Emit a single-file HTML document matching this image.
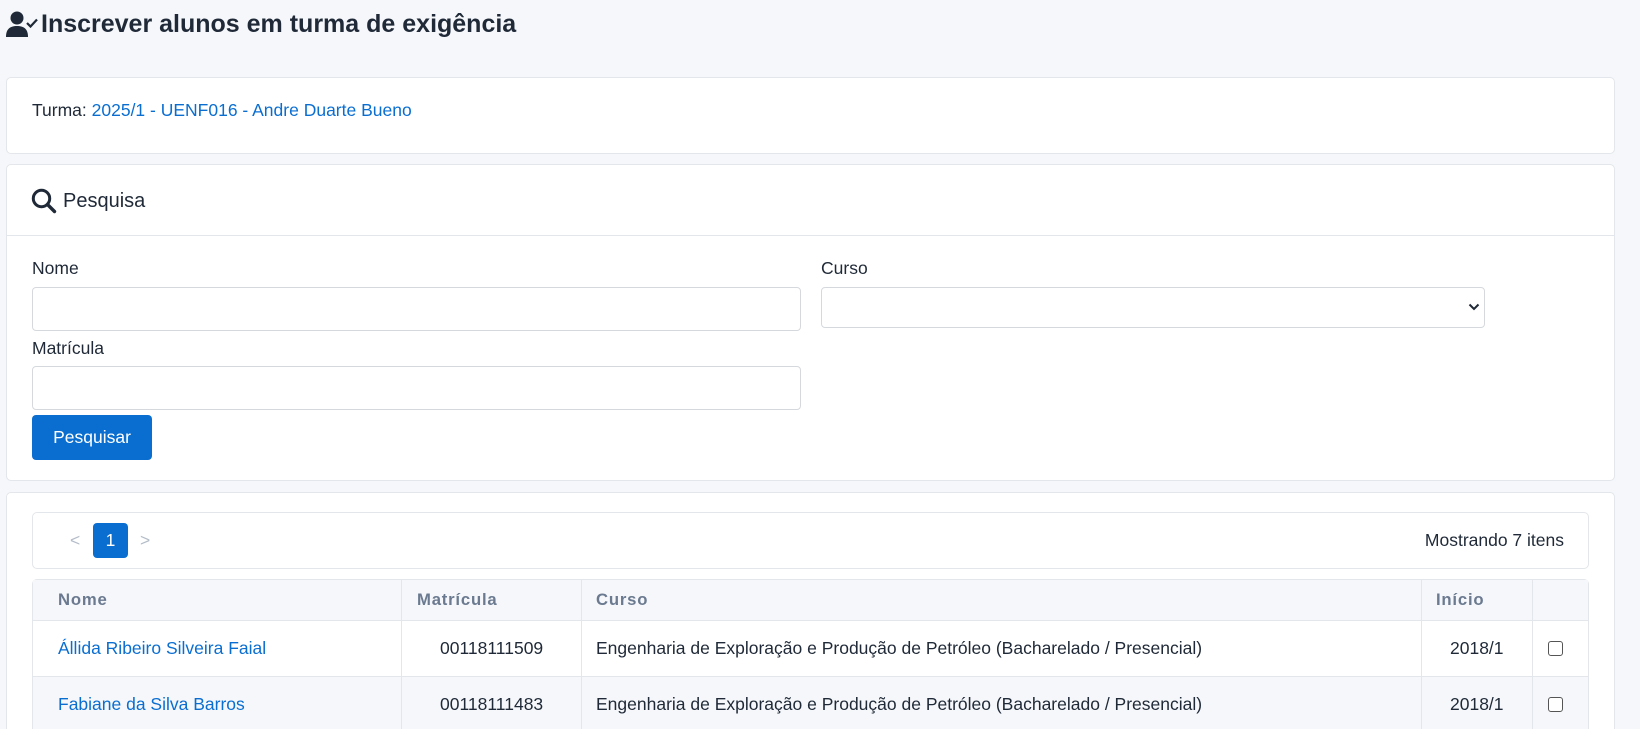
<!DOCTYPE html>
<html><head><meta charset="utf-8"><style>
*{box-sizing:border-box;margin:0;padding:0}
html{width:1640px;height:729px;overflow:hidden}
body{width:1640px;height:729px;overflow:hidden;background:#f5f7fa;font-family:"Liberation Sans",sans-serif;color:#1f2937;font-size:17.5px;position:relative}
.a{position:absolute}
.card{position:absolute;background:#fff;border:1px solid #e3e6ea;border-radius:5px}
.inp{position:absolute;background:#fff;border:1px solid #d5d9de;border-radius:4px}
a{color:#0a6ed1;text-decoration:none}
.th{position:absolute;top:579px;height:41px;line-height:41px;font-weight:bold;color:#6b7a90;letter-spacing:0.8px;font-size:16.7px}
.cell{position:absolute;line-height:56px}
.vl{position:absolute;top:579px;width:1px;height:150px;background:#e3e6ea}
.hl{position:absolute;left:32px;width:1557px;height:1px;background:#e3e6ea}
.cb{position:absolute;width:15px;height:15px;border:1.5px solid #555;border-radius:3px;background:#fff}
</style></head><body>
<svg class="a" style="left:5px;top:10px" width="34" height="28" viewBox="0 0 34 28">
<circle cx="12" cy="8" r="6.5" fill="#1f2937"/>
<path d="M1 27 C1 19 5 16 12 16 C19 16 23 19 23 27 Z" fill="#1f2937"/>
<path d="M22 13 L25.5 16.5 L32 9.5" stroke="#1f2937" stroke-width="2.2" fill="none"/>
</svg>
<div class="a" style="left:41px;top:7px;font-size:25px;font-weight:bold;line-height:34px">Inscrever alunos em turma de exigência</div>

<div class="card" style="left:6px;top:77px;width:1609px;height:77px"></div>
<div class="a" style="left:32px;top:99px;line-height:22px">Turma: <a>2025/1 - UENF016 - Andre Duarte Bueno</a></div>

<div class="card" style="left:6px;top:164px;width:1609px;height:317px"></div>
<div class="a" style="left:7px;top:235px;width:1607px;height:1px;background:#e3e6ea"></div>
<svg class="a" style="left:31px;top:188px" width="26" height="26" viewBox="0 0 26 26"><circle cx="10.5" cy="10.5" r="8.2" stroke="#1f2937" stroke-width="3" fill="none"/><path d="M16.5 16.5 L23.5 23.5" stroke="#1f2937" stroke-width="3.4" stroke-linecap="round"/></svg>
<div class="a" style="left:63px;top:188px;font-size:20px;line-height:26px">Pesquisa</div>

<div class="a" style="left:32px;top:257px;line-height:22px">Nome</div>
<div class="inp" style="left:32px;top:287px;width:769px;height:44px"></div>
<div class="a" style="left:821px;top:257px;line-height:22px">Curso</div>
<div class="inp" style="left:821px;top:287px;width:664px;height:41px"></div>
<svg class="a" style="left:1468px;top:302px" width="12" height="10" viewBox="0 0 12 10"><path d="M1.5 2.5 L6 7 L10.5 2.5" stroke="#1f2937" stroke-width="2" fill="none"/></svg>
<div class="a" style="left:32px;top:337px;line-height:22px">Matrícula</div>
<div class="inp" style="left:32px;top:366px;width:769px;height:44px"></div>
<div class="a" style="left:32px;top:415px;width:120px;height:45px;background:#0a6ed1;border-radius:4px;color:#fff;text-align:center;line-height:45px">Pesquisar</div>

<div class="a" style="left:6px;top:492px;width:1609px;height:237px;background:#fff;border:1px solid #e3e6ea;border-bottom:none;border-radius:5px 5px 0 0"></div>
<div class="card" style="left:32px;top:512px;width:1557px;height:57px"></div>
<div class="a" style="left:70px;top:529px;color:#b4bcc8;line-height:22px">&lt;</div>
<div class="a" style="left:93px;top:523px;width:35px;height:35px;background:#0a6ed1;border-radius:4px;color:#fff;text-align:center;line-height:35px;font-size:17.5px">1</div>
<div class="a" style="left:140px;top:529px;color:#b4bcc8;line-height:22px">&gt;</div>
<div class="a" style="right:76px;top:529px;line-height:22px">Mostrando 7 itens</div>

<div class="a" style="left:32px;top:579px;width:1557px;height:150px;border:1px solid #e3e6ea;border-bottom:none;border-radius:5px 5px 0 0;background:#fff"></div>
<div class="a" style="left:33px;top:580px;width:1555px;height:40px;background:#f5f7fa"></div>
<div class="a" style="left:33px;top:677px;width:1555px;height:52px;background:#f5f7fa"></div>
<div class="hl" style="top:620px"></div>
<div class="hl" style="top:676px"></div>
<div class="vl" style="left:401px"></div>
<div class="vl" style="left:581px"></div>
<div class="vl" style="left:1421px"></div>
<div class="vl" style="left:1532px"></div>

<div class="th" style="left:58px">Nome</div>
<div class="th" style="left:417px">Matrícula</div>
<div class="th" style="left:596px">Curso</div>
<div class="th" style="left:1436px">Início</div>

<div class="cell" style="left:58px;top:620px"><a>Állida Ribeiro Silveira Faial</a></div>
<div class="cell" style="left:440px;top:620px">00118111509</div>
<div class="cell" style="left:596px;top:620px">Engenharia de Exploração e Produção de Petróleo (Bacharelado / Presencial)</div>
<div class="cell" style="left:1450px;top:620px">2018/1</div>
<div class="cb" style="left:1548px;top:641px"></div>

<div class="cell" style="left:58px;top:676px"><a>Fabiane da Silva Barros</a></div>
<div class="cell" style="left:440px;top:676px">00118111483</div>
<div class="cell" style="left:596px;top:676px">Engenharia de Exploração e Produção de Petróleo (Bacharelado / Presencial)</div>
<div class="cell" style="left:1450px;top:676px">2018/1</div>
<div class="cb" style="left:1548px;top:697px"></div>
</body></html>
